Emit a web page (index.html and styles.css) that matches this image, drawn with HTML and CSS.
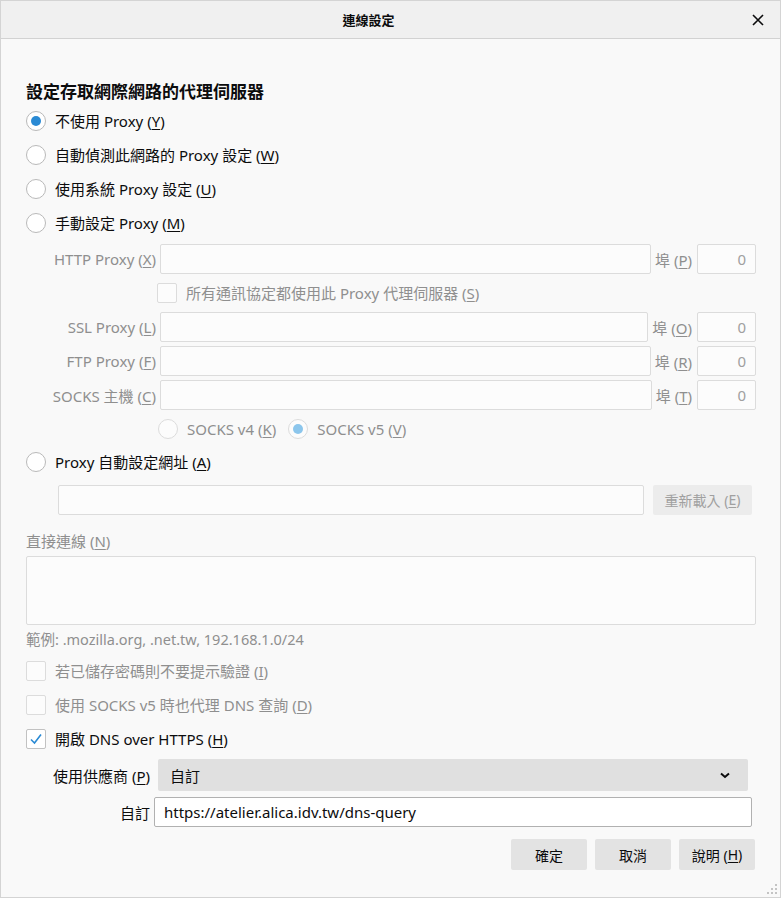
FILE: index.html
```html
<!DOCTYPE html>
<html lang="zh-TW">
<head>
    <meta charset="UTF-8">
    <meta name="viewport" content="width=device-width, initial-scale=1.0">
    <title>連線設定</title>
    <link rel="stylesheet" href="styles.css">
</head>
<body>
    <div class="window">
        <header class="titlebar">
            <span class="title">連線設定</span>
            <button class="close" aria-label="關閉">
                <svg width="12" height="12" viewBox="0 0 12 12"><path d="M1 1 L11 11 M11 1 L1 11" stroke="#0c0c0d" stroke-width="1.6" fill="none"/></svg>
            </button>
        </header>

        <main class="content">
            <h1 class="heading">設定存取網際網路的代理伺服器</h1>

            <label class="row"><span class="radio checked"></span>不使用 Proxy (<u>Y</u>)</label>
            <label class="row"><span class="radio"></span>自動偵測此網路的 Proxy 設定 (<u>W</u>)</label>
            <label class="row"><span class="radio"></span>使用系統 Proxy 設定 (<u>U</u>)</label>
            <label class="row"><span class="radio"></span>手動設定 Proxy (<u>M</u>)</label>

            <div class="manual">
                <div class="field">
                    <span class="field-label">HTTP Proxy (<u>X</u>)</span>
                    <span class="input"></span>
                    <span class="port-label">埠 (<u>P</u>)</span>
                    <span class="input port">0</span>
                </div>
                <label class="row sub-check disabled"><span class="check"></span>所有通訊協定都使用此 Proxy 代理伺服器 (<u>S</u>)</label>
                <div class="field">
                    <span class="field-label">SSL Proxy (<u>L</u>)</span>
                    <span class="input"></span>
                    <span class="port-label">埠 (<u>O</u>)</span>
                    <span class="input port">0</span>
                </div>
                <div class="field">
                    <span class="field-label">FTP Proxy (<u>F</u>)</span>
                    <span class="input"></span>
                    <span class="port-label">埠 (<u>R</u>)</span>
                    <span class="input port">0</span>
                </div>
                <div class="field">
                    <span class="field-label">SOCKS 主機 (<u>C</u>)</span>
                    <span class="input"></span>
                    <span class="port-label">埠 (<u>T</u>)</span>
                    <span class="input port">0</span>
                </div>
                <div class="row socks disabled">
                    <label class="socks-opt"><span class="radio"></span>SOCKS v4 (<u>K</u>)</label>
                    <label class="socks-opt"><span class="radio checked"></span>SOCKS v5 (<u>V</u>)</label>
                </div>
            </div>

            <label class="row"><span class="radio"></span>Proxy 自動設定網址 (<u>A</u>)</label>
            <div class="auto-url">
                <span class="input"></span>
                <span class="btn disabled-btn">重新載入 (<u>E</u>)</span>
            </div>

            <p class="no-proxy-label">直接連線 (<u>N</u>)</p>
            <div class="textarea"></div>
            <p class="hint">範例: .mozilla.org, .net.tw, 192.168.1.0/24</p>

            <label class="row disabled"><span class="check"></span>若已儲存密碼則不要提示驗證 (<u>I</u>)</label>
            <label class="row disabled"><span class="check"></span>使用 SOCKS v5 時也代理 DNS 查詢 (<u>D</u>)</label>
            <label class="row"><span class="check checked">
                <svg width="14" height="14" viewBox="0 0 14 14"><path d="M2 7.5 L5.5 11 L12 2.5" stroke="#2a8ad4" stroke-width="1.6" fill="none"/></svg>
            </span>開啟 DNS over HTTPS (<u>H</u>)</label>

            <div class="doh">
                <span class="doh-label">使用供應商 (<u>P</u>)</span>
                <span class="select">自訂
                    <svg width="10" height="7" viewBox="0 0 10 7"><path d="M1 1.5 L5 5 L9 1.5" stroke="#0c0c0d" stroke-width="2" fill="none"/></svg>
                </span>
            </div>
            <div class="doh custom">
                <span class="doh-label">自訂</span>
                <span class="input url">https://atelier.alica.idv.tw/dns-query</span>
            </div>

            <div class="buttons">
                <span class="btn">確定</span>
                <span class="btn">取消</span>
                <span class="btn">說明 (<u>H</u>)</span>
            </div>
        </main>

        <svg class="grip" width="10" height="10" viewBox="0 0 10 10">
            <rect x="8" y="0" width="2" height="2" fill="#c4c4c4"/>
            <rect x="8" y="4" width="2" height="2" fill="#c4c4c4"/>
            <rect x="4" y="4" width="2" height="2" fill="#c4c4c4"/>
            <rect x="8" y="8" width="2" height="2" fill="#c4c4c4"/>
            <rect x="4" y="8" width="2" height="2" fill="#c4c4c4"/>
            <rect x="0" y="8" width="2" height="2" fill="#c4c4c4"/>
        </svg>
    </div>
</body>
</html>
```

FILE: styles.css
```css
*,
*::after,
*::before{
    box-sizing: border-box;
    margin: 0;
    padding: 0;
}
body{
    font-family: "Noto Sans", "Noto Sans CJK TC", sans-serif;
    font-size: 15px;
    color: #0c0c0d;
    background: #f9f9f9;
}
u{
    text-decoration-thickness: 1px;
    text-underline-offset: 2px;
}
.window{
    position: relative;
    width: 781px;
    height: 898px;
    border: 1px solid #d4d4d4;
    background: #f9f9f9;
}
/* barra de título */
.titlebar{
    height: 38px;
    display: flex;
    align-items: center;
    justify-content: center;
    background: #f0f0f0;
    border-bottom: 1px solid #d2d2d2;
    position: relative;
}
.title{
    font-size: 13px;
    font-weight: 700;
    margin-left: -44px;
}
.close{
    position: absolute;
    right: 16px;
    top: 13px;
    border: none;
    background: none;
    display: flex;
}
.content{
    padding: 41px 24px 0 25px;
}
.heading{
    font-size: 17px;
    font-weight: 600;
    line-height: 24px;
    height: 24px;
}
.row{
    display: flex;
    align-items: center;
    height: 34px;
    line-height: 20px;
}
.radio{
    width: 20px;
    height: 20px;
    border: 1px solid #b9b9b9;
    border-radius: 50%;
    background: #fff;
    margin-right: 9px;
    display: flex;
    align-items: center;
    justify-content: center;
    flex: none;
}
.radio.checked::after{
    content: "";
    width: 10px;
    height: 10px;
    border-radius: 50%;
    background: #2a8ad4;
}
.check{
    width: 20px;
    height: 20px;
    border: 1px solid #c2c2c2;
    border-radius: 2px;
    background: #fff;
    margin-right: 9px;
    flex: none;
    display: flex;
    align-items: center;
    justify-content: center;
}
.disabled{
    color: #8f8f8f;
}
.disabled .check, .disabled .radio{
    border-color: #dcdcdc;
    background: #fcfcfc;
}
.disabled .radio.checked::after{
    background: #8cc6ec;
}
/* campos manuales */
.manual{
    color: #8f8f8f;
    padding-top: 2px;
}
.field{
    display: flex;
    align-items: center;
    height: 34px;
}
.field-label{
    width: 134px;
    text-align: right;
    padding-right: 4px;
    white-space: nowrap;
}
.input{
    flex: 1;
    height: 30px;
    border: 1px solid #dcdcdc;
    border-radius: 2px;
    background: #fcfcfc;
    display: flex;
    align-items: center;
}
.port-label{
    padding: 0 5px 0 4px;
}
.input.port{
    flex: none;
    width: 59px;
    justify-content: flex-end;
    padding-right: 9px;
    color: #a0a0a0;
}
.sub-check{
    padding-left: 131px;
    height: 34px;
}
.socks{
    padding-left: 132px;
    height: 33px;
    gap: 12px;
}
.socks-opt{
    display: flex;
    align-items: center;
}
.auto-url{
    display: flex;
    align-items: center;
    gap: 9px;
    padding: 5px 4px 0 32px;
    height: 36px;
}
.btn{
    display: flex;
    align-items: center;
    justify-content: center;
    height: 31px;
    width: 76px;
    border-radius: 2px;
    background: #e3e3e3;
    font-size: 14px;
}
.disabled-btn{
    width: 99px;
    height: 30px;
    background: #ececec;
    color: #a0a0a0;
}
.no-proxy-label{
    color: #8f8f8f;
    line-height: 20px;
    margin-top: 16px;
}
.textarea{
    height: 69px;
    border: 1px solid #dcdcdc;
    border-radius: 2px;
    background: #fcfcfc;
    margin-top: 5px;
}
.hint{
    color: #8f8f8f;
    line-height: 20px;
    margin: 4px 0 5px;
    font-size: 14.5px;
}
/* DNS over HTTPS */
.doh{
    display: flex;
    align-items: center;
    margin-top: 3px;
    padding-right: 8px;
}
.doh-label{
    width: 132px;
    text-align: right;
    padding-right: 8px;
    white-space: nowrap;
}
.select{
    flex: 1;
    height: 32px;
    background: #e0e0e0;
    border-radius: 2px;
    display: flex;
    align-items: center;
    justify-content: space-between;
    padding: 0 18px 0 12px;
}
.doh.custom{
    margin-top: 6px;
    padding-right: 4px;
}
.custom .doh-label{
    width: 128px;
    padding-right: 4px;
}
.input.url{
    border-color: #b1b1b1;
    background: #fff;
    padding-left: 9px;
}
.buttons{
    display: flex;
    justify-content: flex-end;
    gap: 8px;
    margin-top: 12px;
    padding-right: 1px;
}
.grip{
    position: absolute;
    right: 3px;
    bottom: 3px;
}
```
